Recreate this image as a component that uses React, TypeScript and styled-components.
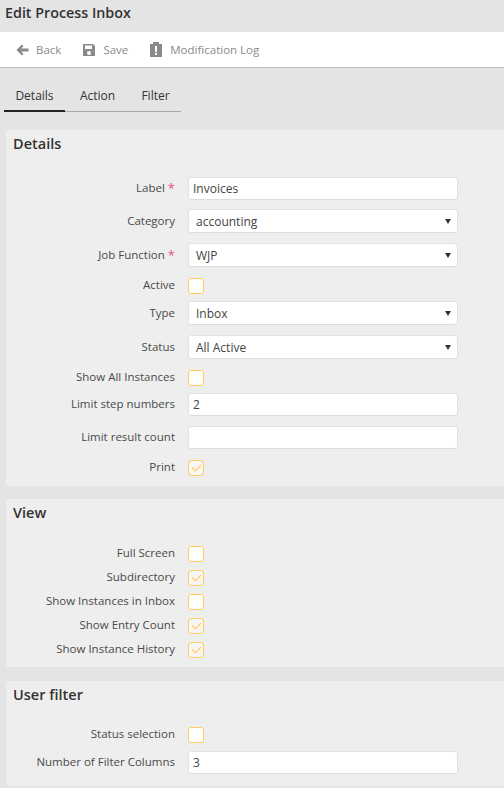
import React from "react";
import styled, { createGlobalStyle } from "styled-components";

const GlobalStyle = createGlobalStyle`
    html, body {
        margin: 0;
        padding: 0;
        background: #e4e4e4;
        font-family: "Open Sans", "Liberation Sans", sans-serif;
        font-size: 12px;
        color: #333;
        overflow: hidden;
    }
`;

const Page = styled.div`
    width: 504px;
    height: 788px;
    overflow: hidden;
    background: #e4e4e4;
`;

const TitleBar = styled.div`
    height: 32px;
    padding-left: 5px;
    display: flex;
    align-items: center;
    font-size: 14.3px;
    font-weight: 600;
    color: #333;
    padding-bottom: 7px;
    box-sizing: border-box;
`;

const Toolbar = styled.div`
    height: 35px;
    background: #fff;
    display: flex;
    align-items: center;
    padding-left: 16px;
    gap: 21px;
    box-shadow: 0 1px 1px rgba(0, 0, 0, 0.15);
`;

const ToolButton = styled.div`
    display: flex;
    align-items: center;
    gap: 7px;
    color: #8a8a8a;
    font-size: 11.5px;
`;

const Tabs = styled.div`
    display: flex;
    width: 177px;
    height: 45px;
    margin: 0 0 18px 4px;
    box-sizing: border-box;
    border-bottom: 1px solid #a8a8a8;
`;

const Tab = styled.div<{ $active?: boolean; $width: number }>`
    width: ${(p) => p.$width}px;
    height: 45px;
    box-sizing: border-box;
    text-align: center;
    padding-top: 20px;
    line-height: 17px;
    font-size: 12px;
    color: #333;
    border-bottom: ${(p) => (p.$active ? "2px solid #222" : "none")};
`;

const Panel = styled.section<{ $height: number; $gap: number }>`
    height: ${(p) => p.$height}px;
    box-sizing: border-box;
    margin: 0 0 ${(p) => p.$gap}px 6px;
    background: #eee;
    border-radius: 3px 0 0 3px;
`;

const PanelTitle = styled.h2<{ $gap: number }>`
    margin: 0 0 ${(p) => p.$gap}px 0;
    padding: 4px 0 0 7px;
    height: 24px;
    box-sizing: border-box;
    line-height: 19px;
    font-size: 14.5px;
    font-weight: 600;
    color: #333;
`;

const Row = styled.div<{ $height: number; $gap: number }>`
    display: grid;
    grid-template-columns: 169px 270px;
    column-gap: 13px;
    align-items: center;
    height: ${(p) => p.$height}px;
    margin-bottom: ${(p) => p.$gap}px;
`;

const Label = styled.label<{ $lift?: number }>`
    text-align: right;
    font-size: 11.5px;
    line-height: 16px;
    padding-bottom: ${(p) => p.$lift ?? 2}px;
    color: #4a4a4a;
    white-space: nowrap;
`;

const Required = styled.span`
    color: #f0506e;
    margin-left: 3px;
    font-size: 13px;
    vertical-align: -1px;
    line-height: 1;
`;

const TextBox = styled.div`
    height: 23px;
    background: #fff;
    border: 1px solid #e2e2e2;
    border-bottom-color: #ddd;
    border-radius: 3px;
    box-sizing: border-box;
    padding-left: 4px;
    line-height: 22px;
    font-size: 12px;
    color: #444;
`;

const SelectBox = styled(TextBox)`
    height: 24px;
    padding-left: 7px;
    line-height: 23px;
    position: relative;
`;

const Arrow = styled.span`
    position: absolute;
    right: 6px;
    top: 9px;
    width: 0;
    height: 0;
    border-left: 3px solid transparent;
    border-right: 3px solid transparent;
    border-top: 5px solid #333;
`;

const CheckBox = styled.span<{ $checked?: boolean }>`
    display: flex;
    align-items: center;
    justify-content: center;
    width: 16px;
    height: 16px;
    box-sizing: border-box;
    background: ${(p) => (p.$checked ? "#f6f6f6" : "#fff")};
    border: 1px solid #ffcf5c;
    border-radius: 3px;
`;

const Check = () => (
    <svg width="11" height="8" viewBox="0 0 11 8" fill="none">
        <path d="M1 3.5l3.5 3.5 5.5-6" stroke="#ffcf5c" strokeWidth="1.2" />
    </svg>
);

type FieldProps = { label: string; required?: boolean; gap?: number };

const TextField = ({ label, required, gap = 10, value }: FieldProps & { value?: string }) => (
    <Row $height={23} $gap={gap}>
        <Label>
            {label}
            {required && <Required>*</Required>}
        </Label>
        <TextBox>{value}</TextBox>
    </Row>
);

const SelectField = ({ label, required, gap = 10, value }: FieldProps & { value: string }) => (
    <Row $height={24} $gap={gap}>
        <Label $lift={0}>
            {label}
            {required && <Required>*</Required>}
        </Label>
        <SelectBox>
            {value}
            <Arrow />
        </SelectBox>
    </Row>
);

const CheckField = ({ label, checked, gap = 8 }: FieldProps & { checked?: boolean }) => (
    <Row $height={16} $gap={gap}>
        <Label>{label}</Label>
        <CheckBox $checked={checked}>{checked && <Check />}</CheckBox>
    </Row>
);

const App: React.FC = () => {
    return (
        <Page>
            <GlobalStyle />
            <TitleBar>Edit Process Inbox</TitleBar>
            <Toolbar>
                <ToolButton>
                    <svg width="13" height="12" viewBox="0 0 13 12">
                        <path d="M6 0.5L0.5 6 6 11.5 7.5 10 5.2 7.5H12.5v-3H5.2L7.5 2z" fill="#8a8a8a" />
                    </svg>
                    Back
                </ToolButton>
                <ToolButton>
                    <svg width="14" height="14" viewBox="0 0 14 14">
                        <path
                            d="M1 1h10l2 2v10H1zM3 2.5V6h7V2.5zM7 8a2 2 0 100 4 2 2 0 000-4z"
                            fill="#8a8a8a"
                            fillRule="evenodd"
                        />
                    </svg>
                    Save
                </ToolButton>
                <ToolButton>
                    <svg width="14" height="15" viewBox="0 0 14 15">
                        <path
                            d="M1 2h3V0h6v2h3v13H1zM6 4v6h2V4zM6 11v2h2v-2z"
                            fill="#8a8a8a"
                            fillRule="evenodd"
                        />
                    </svg>
                    Modification Log
                </ToolButton>
            </Toolbar>
            <Tabs>
                <Tab $active $width={61}>Details</Tab>
                <Tab $width={65}>Action</Tab>
                <Tab $width={51}>Filter</Tab>
            </Tabs>
            <Panel $height={356} $gap={13}>
                <PanelTitle $gap={23}>Details</PanelTitle>
                <TextField label="Label" required value="Invoices" gap={9} />
                <SelectField label="Category" value="accounting" />
                <SelectField label="Job Function" required value="WJP" />
                <CheckField label="Active" />
                <SelectField label="Type" value="Inbox" />
                <SelectField label="Status" value="All Active" />
                <CheckField label="Show All Instances" />
                <TextField label="Limit step numbers" value="2" />
                <TextField label="Limit result count" />
                <CheckField label="Print" checked />
            </Panel>
            <Panel $height={168} $gap={14}>
                <PanelTitle $gap={22}>View</PanelTitle>
                <CheckField label="Full Screen" />
                <CheckField label="Subdirectory" checked />
                <CheckField label="Show Instances in Inbox" />
                <CheckField label="Show Entry Count" checked />
                <CheckField label="Show Instance History" checked />
            </Panel>
            <Panel $height={105} $gap={0}>
                <PanelTitle $gap={21}>User filter</PanelTitle>
                <CheckField label="Status selection" gap={9} />
                <TextField label="Number of Filter Columns" value="3" />
            </Panel>
        </Page>
    );
};

export default App;
